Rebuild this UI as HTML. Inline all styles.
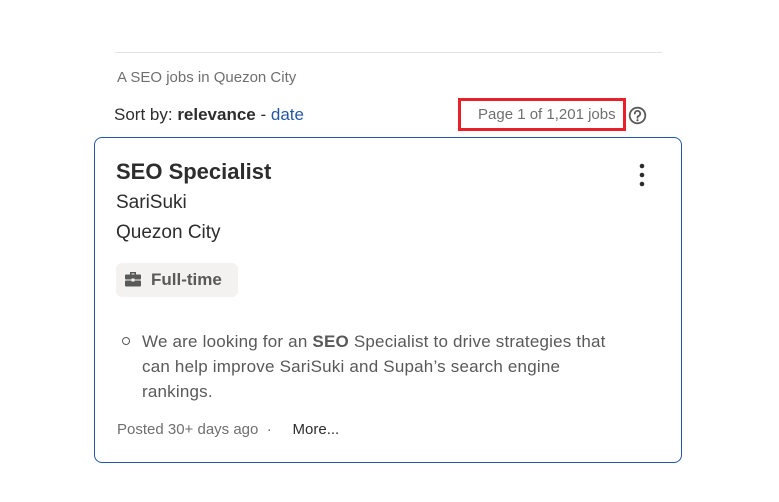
<!DOCTYPE html>
<html><head><meta charset="utf-8"><style>
body{margin:0;width:779px;height:502px;background:#fff;font-family:"Liberation Sans",sans-serif;position:relative;overflow:hidden;color:#2d2d2d}
.a{position:absolute;white-space:nowrap}
</style></head><body>
<div class="a" style="left:115px;top:52px;width:547px;height:1px;background:#e4e2e0"></div>
<div class="a" style="left:117px;top:69px;font-size:15px;color:#6f6f6f">A SEO jobs in Quezon City</div>
<div class="a" style="left:114px;top:105px;font-size:17px;color:#2d2d2d">Sort by: <b>relevance</b> - <span style="color:#2557a7">date</span></div>
<div class="a" style="left:458px;top:98px;width:162px;height:27px;border:3px solid #e8202a"></div>
<div class="a" style="left:478px;top:106px;font-size:15px;color:#6f6f6f">Page 1 of 1,201 jobs</div>
<svg class="a" style="left:628px;top:106px" width="19" height="19" viewBox="0 0 19 19"><circle cx="9.5" cy="9.5" r="7.8" fill="none" stroke="#595959" stroke-width="1.8"/><path d="M6.8 7.6a2.7 2.7 0 1 1 3.6 2.5c-.7.3-.9.7-.9 1.4v.4" fill="none" stroke="#595959" stroke-width="1.8" stroke-linecap="round"/><circle cx="9.5" cy="14.2" r="1.1" fill="#595959"/></svg>
<div class="a" style="left:94px;top:137px;width:586px;height:324px;border:1px solid #2557a7;border-radius:8px"></div>
<div class="a" style="left:116px;top:159px;font-size:22px;font-weight:bold;color:#2d2d2d">SEO Specialist</div>
<svg class="a" style="left:638px;top:163px" width="8" height="24"><circle cx="4" cy="3" r="2.3" fill="#2d2d2d"/><circle cx="4" cy="12" r="2.3" fill="#2d2d2d"/><circle cx="4" cy="21" r="2.3" fill="#2d2d2d"/></svg>
<div class="a" style="left:116px;top:192px;font-size:19px">SariSuki</div>
<div class="a" style="left:116px;top:222px;font-size:19px">Quezon City</div>
<div class="a" style="left:116px;top:263px;width:122px;height:34px;background:#f3f2f1;border-radius:6px"></div>
<svg class="a" style="left:124px;top:271px" width="18" height="16" viewBox="0 0 18 16"><path d="M6 1h6v2.5h-1.5v-1h-3v1H6z" fill="#595959"/><rect x="1" y="3.5" width="16" height="5" rx="1" fill="#595959"/><rect x="1" y="9.5" width="16" height="6" rx="1" fill="#595959"/><rect x="7.5" y="7.5" width="3" height="3" fill="#f3f2f1"/></svg>
<div class="a" style="left:151px;top:270px;font-size:17px;font-weight:bold;color:#595959">Full-time</div>
<div class="a" style="left:122px;top:337px;width:6px;height:6px;border:1px solid #595959;border-radius:50%"></div>
<div class="a" style="left:142px;top:329px;font-size:17px;line-height:25px;color:#595959;white-space:normal;width:490px;letter-spacing:0.2px">We are looking for an <b>SEO</b> Specialist to drive strategies that can help improve SariSuki and Supah’s search engine rankings.</div>
<div class="a" style="left:117px;top:421px;font-size:15px;color:#6f6f6f">Posted 30+ days ago&nbsp;&nbsp;·&nbsp;&nbsp;&nbsp;&nbsp;&nbsp;<span style="color:#2d2d2d">More...</span></div>
</body></html>
